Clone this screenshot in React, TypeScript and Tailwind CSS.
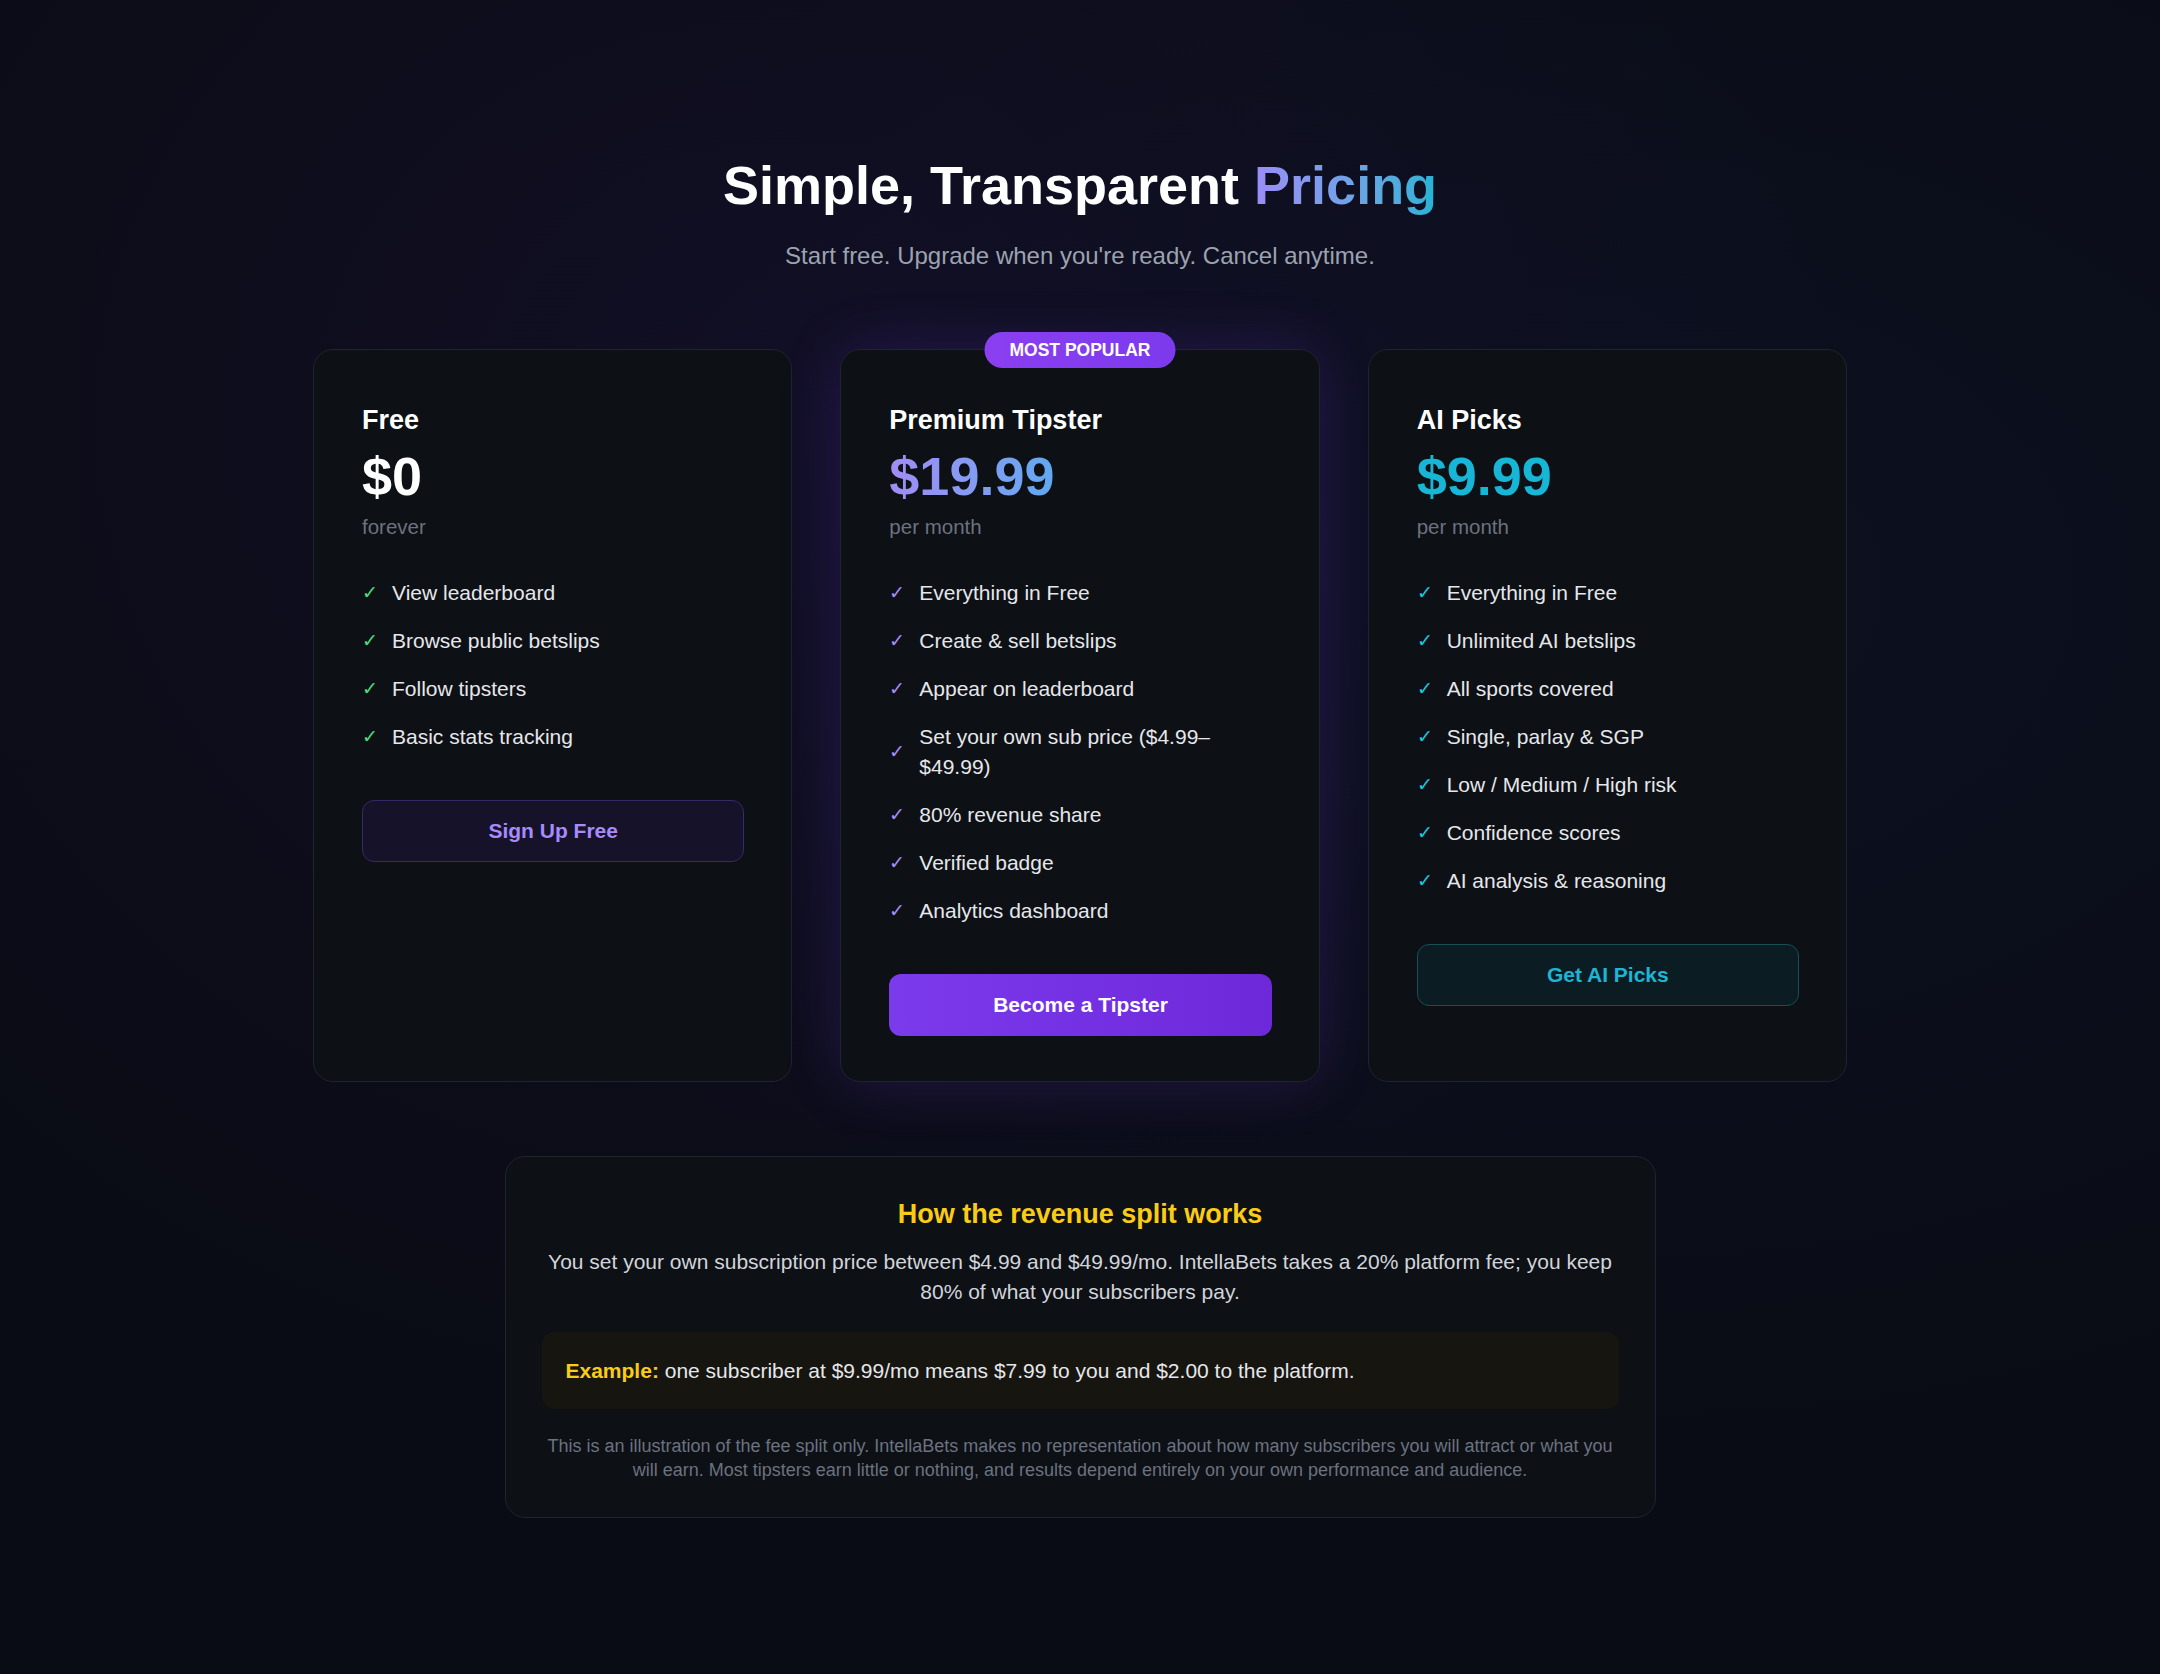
import React from "react";

type Plan = {
  name: string;
  price: string;
  period: string;
  priceClass: string;
  checkClass: string;
  features: string[];
  cta: string;
  ctaClass: string;
  popular?: boolean;
};

const plans: Plan[] = [
  {
    name: "Free",
    price: "$0",
    period: "forever",
    priceClass: "text-white",
    checkClass: "text-[#4ade80]",
    features: ["View leaderboard", "Browse public betslips", "Follow tipsters", "Basic stats tracking"],
    cta: "Sign Up Free",
    ctaClass: "bg-[#15122a] border border-[#352a68] text-[#a78bfa]",
  },
  {
    name: "Premium Tipster",
    price: "$19.99",
    period: "per month",
    priceClass: "bg-gradient-to-r from-[#a08cf6] to-[#5ea9f0] bg-clip-text text-transparent",
    checkClass: "text-[#a78bfa]",
    features: [
      "Everything in Free",
      "Create & sell betslips",
      "Appear on leaderboard",
      "Set your own sub price ($4.99–$49.99)",
      "80% revenue share",
      "Verified badge",
      "Analytics dashboard",
    ],
    cta: "Become a Tipster",
    ctaClass: "bg-gradient-to-r from-[#7c3aed] to-[#6d28d9] text-white",
    popular: true,
  },
  {
    name: "AI Picks",
    price: "$9.99",
    period: "per month",
    priceClass: "text-[#17b6d6]",
    checkClass: "text-[#22c3e0]",
    features: [
      "Everything in Free",
      "Unlimited AI betslips",
      "All sports covered",
      "Single, parlay & SGP",
      "Low / Medium / High risk",
      "Confidence scores",
      "AI analysis & reasoning",
    ],
    cta: "Get AI Picks",
    ctaClass: "bg-[#0c1c23] border border-[#164e5a] text-[#1cb5d4]",
  },
];

const PlanCard = ({ plan }: { plan: Plan }) => (
  <div
    className={`relative rounded-[20px] border border-[#1e2430] bg-[#0d1015] pb-[45px] pl-[48px] pr-[47px] pt-[48px] ${
      plan.popular ? "shadow-[0_0_60px_rgba(124,58,237,0.2)]" : ""
    }`}
  >
    {plan.popular && (
      <div className="absolute left-1/2 top-[-18px] -translate-x-1/2 rounded-full bg-gradient-to-r from-[#8b3ff0] to-[#7c3aed] px-[25px] text-[17.5px] font-bold leading-[36px] text-white whitespace-nowrap">
        MOST POPULAR
      </div>
    )}
    <div className="text-[27px] font-bold leading-[44px] text-white">{plan.name}</div>
    <div className="mt-[7px] text-[54px] font-bold leading-[54px]">
      <span className={plan.priceClass}>{plan.price}</span>
    </div>
    <div className="mt-[10px] text-[20.5px] leading-[28px] text-[#6b7280]">{plan.period}</div>
    <ul className="mt-[37px] flex flex-col gap-[18px]">
      {plan.features.map((f) => (
        <li key={f} className="flex items-center gap-[16px] text-[21px] leading-[30px] text-[#e5e7eb]">
          <span className={`w-[14px] shrink-0 text-[19px] ${plan.checkClass}`}>✓</span>
          <span className="pr-[40px]">{f}</span>
        </li>
      ))}
    </ul>
    <button
      className={`mt-[48px] flex h-[62px] w-full items-center justify-center rounded-[12px] text-[21px] font-bold ${plan.ctaClass}`}
    >
      {plan.cta}
    </button>
  </div>
);

export default function App() {
  return (
    <div
      className="min-h-[1674px] bg-[#0a0c15] bg-[radial-gradient(ellipse_at_35%_25%,rgba(76,29,149,0.11),transparent_55%),radial-gradient(ellipse_at_75%_35%,rgba(30,58,138,0.1),transparent_55%)] pb-[160px] pt-[153px]"
      style={{ fontFamily: '"Liberation Sans", Arial, sans-serif' }}
    >
      <div className="text-center">
        <h1 className="text-[54px] font-bold leading-[65px] text-white">
          Simple, Transparent{" "}
          <span className="bg-gradient-to-r from-[#9a8cf7] to-[#1fb3d6] bg-clip-text text-transparent">Pricing</span>
        </h1>
        <p className="mt-[20px] text-[24px] leading-[36px] text-[#9ca3af]">
          Start free. Upgrade when you're ready. Cancel anytime.
        </p>
      </div>

      <div className="mx-auto mt-[75px] grid w-[1534px] grid-cols-3 gap-[48px]">
        {plans.map((p) => (
          <PlanCard key={p.name} plan={p} />
        ))}
      </div>

      <div className="mx-auto mt-[74px] w-[1151px] rounded-[20px] border border-[#1e2430] bg-[#0d1015] px-[34px] pb-[35px] pt-[39px] text-center">
        <h2 className="text-[27px] font-bold leading-[36px] text-[#facc15]">How the revenue split works</h2>
        <p className="mt-[15px] text-[21px] leading-[30px] text-[#d1d5db]">
          You set your own subscription price between $4.99 and $49.99/mo. IntellaBets takes a 20% platform fee; you
          keep 80% of what your subscribers pay.
        </p>
        <div className="mx-[2px] mt-[25px] flex h-[77px] items-center rounded-[12px] bg-[#16150f] px-[24px] text-left text-[21px] text-[#e5e7eb]">
          <span>
            <span className="font-bold text-[#facc15]">Example:</span> one subscriber at $9.99/mo means $7.99 to you and
            $2.00 to the platform.
          </span>
        </div>
        <p className="mt-[25px] px-[6px] text-[18px] leading-[24px] text-[#6b7280]">
          This is an illustration of the fee split only. IntellaBets makes no representation about how many subscribers
          you will attract or what you will earn. Most tipsters earn little or nothing, and results depend entirely on
          your own performance and audience.
        </p>
      </div>
    </div>
  );
}
